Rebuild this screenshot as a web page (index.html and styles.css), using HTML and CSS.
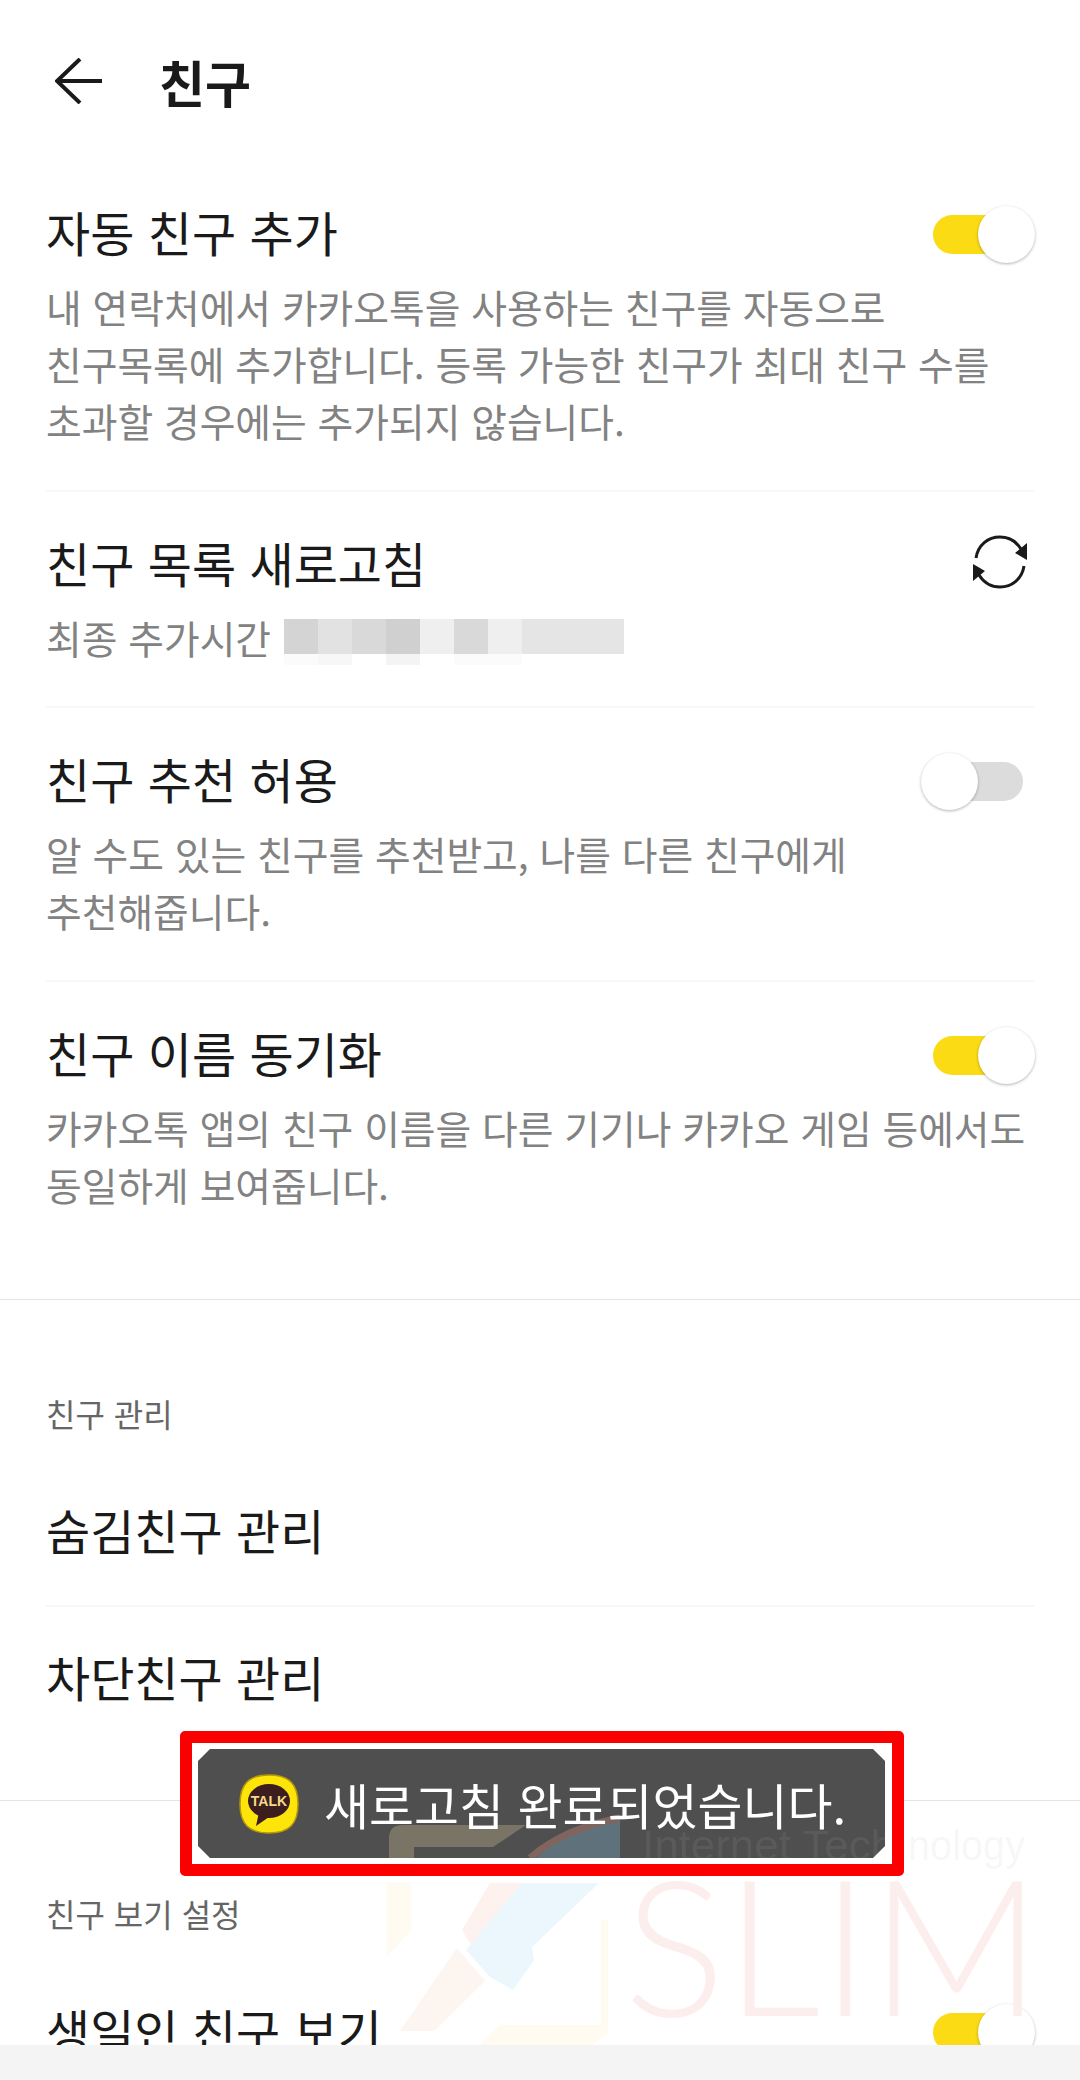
FILE: index.html
```html
<!DOCTYPE html>
<html lang="ko">
<head>
    <meta charset="UTF-8">
    <meta name="viewport" content="width=device-width, initial-scale=1.0">
    <title>친구</title>
    <link rel="stylesheet" href="styles.css">
</head>
<body>
    <div class="page">
        <header class="topbar">
            <svg class="back" width="48" height="46" viewBox="0 0 48 46">
                <path d="M47 23H2M25 1 2 23l23 22" fill="none" stroke="#1a1a1a" stroke-width="4"/>
            </svg>
            <h1>친구</h1>
        </header>

        <section class="group">
            <div class="row">
                <div class="row-head">
                    <h2>자동 친구 추가</h2>
                    <span class="toggle on"><i class="track"></i><i class="knob"></i></span>
                </div>
                <p>내 연락처에서 카카오톡을 사용하는 친구를 자동으로<br>친구목록에 추가합니다. 등록 가능한 친구가 최대 친구 수를<br>초과할 경우에는 추가되지 않습니다.</p>
            </div>
            <div class="row refresh">
                <div class="row-head">
                    <h2>친구 목록 새로고침</h2>
                    <svg class="sync" width="54" height="54" viewBox="0 0 54 54">
                        <path d="M3 23C5 10 15 2 27 2c9 0 16 4 21 12M51 31c-2 13-12 21-24 21-9 0-16-4-21-12" fill="none" stroke="#1a1a1a" stroke-width="3"/>
                        <path d="M54 8v17L42 18zM0 46V29l12 7z" fill="#1a1a1a"/>
                    </svg>
                </div>
                <div class="last-added">
                    <p>최종 추가시간</p>
                    <div class="mosaic">
                        <i class="s2"></i><i class="s4"></i><i class="s3"></i><i class="s1"></i><i class="s6"></i><i class="s3"></i><i class="s6"></i><i class="s5"></i><i class="s5"></i><i class="s5"></i>
                        <i class="f2"></i><i class="f3"></i><i></i><i class="f4"></i><i></i><i class="f2"></i><i class="f2"></i><i></i><i></i><i></i>
                    </div>
                </div>
            </div>
            <div class="row">
                <div class="row-head">
                    <h2>친구 추천 허용</h2>
                    <span class="toggle"><i class="track"></i><i class="knob"></i></span>
                </div>
                <p>알 수도 있는 친구를 추천받고, 나를 다른 친구에게<br>추천해줍니다.</p>
            </div>
            <div class="row">
                <div class="row-head">
                    <h2>친구 이름 동기화</h2>
                    <span class="toggle on"><i class="track"></i><i class="knob"></i></span>
                </div>
                <p>카카오톡 앱의 친구 이름을 다른 기기나 카카오 게임 등에서도<br>동일하게 보여줍니다.</p>
            </div>
        </section>

        <section class="group manage">
            <h3>친구 관리</h3>
            <div class="row link"><h2>숨김친구 관리</h2></div>
            <div class="row link"><h2>차단친구 관리</h2></div>
        </section>

        <section class="group view">
            <h3>친구 보기 설정</h3>
            <div class="row link">
                <div class="row-head">
                    <h2>생일인 친구 보기</h2>
                    <span class="toggle on"><i class="track"></i><i class="knob"></i></span>
                </div>
            </div>
        </section>

        <!-- watermark sits over the page, very pale -->
        <svg class="watermark" width="660" height="325" viewBox="380 1720 660 325">
            <path d="M387 1883h24v47l-24 27z" fill="#fffbf0"/>
            <path d="M490 1883h32l-51 62-9-15z" fill="#fdf2ee"/>
            <path d="M522 1883h77l-67 64 2 13-21 30-23-13-24-27z" fill="#ebf7fc"/>
            <path d="M457 1948l28 33-51 50h-34z" fill="#fdf5ef"/>
            <path d="M601 1920h7v113l-16 12H480l19-20h102z" fill="#fffbf0"/>
            <text class="wm-sub" x="908" y="1860" textLength="117" lengthAdjust="spacingAndGlyphs">nology</text>
            <text class="wm-name" x="624" y="2016">SLIM</text>
        </svg>

        <div class="toast-frame">
            <div class="toast">
                <svg class="toast-mark" width="687" height="109" viewBox="198 1749 687 109">
                    <path d="M389 1858v-20q0-13 14-13h123l-33 22h-79v11z" fill="#7a7466"/>
                    <path d="M620 1819v39h-84q30-28 84-39z" fill="#5f727c"/>
                    <path d="M530 1858q35-30 90-40" fill="none" stroke="#80655f" stroke-width="7"/>
                    <text class="wm-sub" x="642" y="1860" textLength="253" lengthAdjust="spacingAndGlyphs">Internet Tech</text>
                </svg>
                <svg class="talk" width="60" height="60" viewBox="0 0 60 60">
                    <path d="M30 1c20 0 29 9 29 29s-9 29-29 29S1 50 1 30 10 1 30 1z" fill="#fde50a" stroke="#b8960a" stroke-width="1.5"/>
                    <ellipse cx="30" cy="27" rx="21" ry="17" fill="#3c1e1e"/>
                    <path d="M20 38l-3 14 13-9z" fill="#3c1e1e"/>
                    <text class="talk-text" x="30" y="32">TALK</text>
                </svg>
                <span>새로고침 완료되었습니다.</span>
            </div>
        </div>

        <div class="bottom-bar"></div>
    </div>
</body>
</html>
```

FILE: styles.css
```css
* {
    box-sizing: border-box;
}
body {
    margin: 0;
    background-color: #fff;
    font-family: "Noto Sans CJK KR", "Noto Sans", sans-serif;
    color: #1a1a1a;
}
.page {
    position: relative;
    width: 1080px;
    height: 2080px;
    overflow: hidden;
}
.topbar {
    display: flex;
    align-items: center;
    height: 161px;
    padding-left: 55px;
}
.back {
    margin-right: 56px;
}
h1 {
    margin: 0;
    font-size: 50px;
    font-weight: 700;
}
h2 {
    margin: 0;
    font-size: 48px;
    font-weight: 400;
    line-height: 64px;
}
h3 {
    margin: 0 0 21px;
    font-size: 32px;
    font-weight: 400;
    line-height: 44px;
    color: #666;
}
p {
    margin: 0;
    font-size: 38.8px;
    line-height: 57px;
    color: #828282;
    white-space: nowrap;
}
.group {
    padding: 0 46px;
}
.row {
    padding: 38px 0 41px;
    border-bottom: 2px solid #f7f7f7;
}
.row:last-child {
    border-bottom: none;
}
.refresh {
    padding-bottom: 40px;
}
.row-head {
    display: flex;
    justify-content: space-between;
    align-items: center;
    margin-bottom: 15px;
}
.toggle {
    position: relative;
    width: 113px;
    height: 64px;
}
.track {
    position: absolute;
    left: 12px;
    top: 16px;
    width: 90px;
    height: 39px;
    border-radius: 20px;
    background-color: #dcdcdc;
}
.knob {
    position: absolute;
    left: 0;
    top: 7px;
    width: 57px;
    height: 57px;
    border-radius: 50%;
    background-color: #fff;
    box-shadow: 0 1px 3px rgba(0, 0, 0, 0.3);
}
.toggle.on .track {
    background-color: #fadb14;
}
.toggle.on .knob {
    left: 57px;
}
.sync {
    margin-right: 7px;
}
.last-added {
    display: flex;
    align-items: flex-start;
    gap: 13px;
}
.mosaic {
    display: grid;
    grid-template-columns: repeat(10, 34px);
    grid-template-rows: 35px 11px;
    margin-top: 10px;
}
.s1 { background-color: #d0d0d0; }
.s2 { background-color: #d4d4d4; }
.s3 { background-color: #d9d9d9; }
.s4 { background-color: #e2e2e2; }
.s5 { background-color: #e5e5e5; }
.s6 { background-color: #efefef; }
.f2 { background-color: #fbfbfb; }
.f3 { background-color: #f7f7f7; }
.f4 { background-color: #f4f4f4; }
.manage {
    margin-top: 45px;
    padding-top: 91px;
    border-top: 1px solid #e4e4e4;
}
.manage .link {
    padding: 41px 0 44px;
}
.manage .link:last-child {
    padding: 37px 0 92px;
}
.view {
    padding-top: 90px;
    border-top: 1px solid #e4e4e4;
}
.view .link {
    padding-top: 41px;
}
.watermark {
    position: absolute;
    left: 380px;
    top: 1720px;
}
.wm-sub {
    font-family: "Liberation Sans", sans-serif;
    font-size: 42px;
    fill: #000;
    fill-opacity: 0.05;
}
.wm-name {
    font-family: Lato, sans-serif;
    font-size: 189px;
    font-weight: 300;
    fill: #fdeeee;
}
.toast-frame {
    position: absolute;
    left: 180px;
    top: 1731px;
    width: 724px;
    height: 145px;
    padding: 6px 7px 6px 6px;
    border: 12px solid #fa0000;
    border-radius: 5px;
    background-color: #fff;
}
.toast {
    position: relative;
    display: flex;
    align-items: center;
    gap: 25px;
    height: 109px;
    padding: 0 0 0 41px;
    overflow: hidden;
    background-color: #4f4f4f;
    clip-path: polygon(12px 0, calc(100% - 12px) 0, 100% 12px, 100% calc(100% - 12px), calc(100% - 12px) 100%, 12px 100%, 0 calc(100% - 12px), 0 12px);
    color: #fff;
    font-size: 48.9px;
    white-space: nowrap;
}
.toast span {
    position: relative;
}
.toast-mark {
    position: absolute;
    left: 0;
    top: 0;
}
.toast-mark .wm-sub {
    fill: #fff;
    fill-opacity: 0.07;
}
.talk {
    position: relative;
    flex-shrink: 0;
}
.talk-text {
    font-family: "Liberation Sans", sans-serif;
    font-size: 14px;
    font-weight: 700;
    fill: #f5d98a;
    text-anchor: middle;
}
.bottom-bar {
    position: absolute;
    left: 0;
    right: 0;
    bottom: 0;
    height: 35px;
    background-color: #f4f4f4;
}
```
